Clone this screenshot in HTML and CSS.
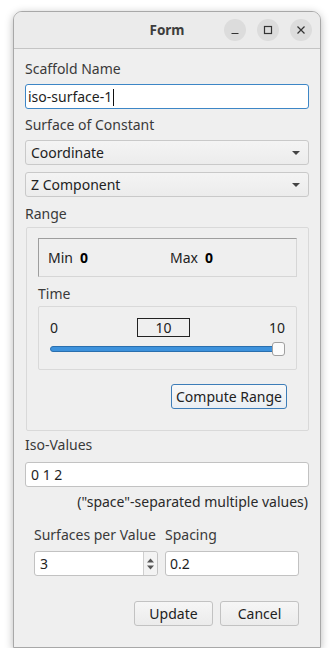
FILE: index.html
```html
<!DOCTYPE html>
<html>
<head>
<meta charset="utf-8">
<link rel="stylesheet" href="styles.css">
</head>
<body>
<div class="window">
  <div class="titlebar">
    <span class="title">Form</span>
    <div class="wbtns">
      <span class="wbtn"><svg width="10" height="10" viewBox="0 0 10 10"><path d="M1.5 8.5h7" stroke="#333" stroke-width="1.2"/></svg></span>
      <span class="wbtn"><svg width="10" height="10" viewBox="0 0 10 10"><rect x="1.5" y="1.5" width="7" height="7" fill="none" stroke="#333" stroke-width="1.2"/></svg></span>
      <span class="wbtn"><svg width="10" height="10" viewBox="0 0 10 10"><path d="M1.5 1.5l7 7M8.5 1.5l-7 7" stroke="#333" stroke-width="1.2"/></svg></span>
    </div>
  </div>
  <div class="content">
    <div class="label l-first">Scaffold Name</div>
    <div class="input focused">iso-surface-1<span class="caret"></span></div>
    <div class="label l-soc">Surface of Constant</div>
    <div class="combo c1"><span>Coordinate</span><span class="arrow"></span></div>
    <div class="combo c2"><span>Z Component</span><span class="arrow"></span></div>
    <div class="label l-range">Range</div>
    <div class="group">
      <div class="minmax">
        <span class="mm-label">Min</span><b class="mm-val">0</b>
        <span class="mm-label mm-max">Max</span><b class="mm-val">0</b>
      </div>
      <div class="label l-time">Time</div>
      <div class="timebox">
        <div class="trow">
          <span>0</span>
          <span class="tval">10</span>
          <span>10</span>
        </div>
        <div class="slider">
          <div class="groove"></div>
          <div class="handle"></div>
        </div>
      </div>
      <div class="btnrow"><span class="btn compute">Compute Range</span></div>
    </div>
    <div class="label l-iso">Iso-Values</div>
    <div class="input iso">0 1 2</div>
    <div class="hint">("space"-separated multiple values)</div>
    <div class="pair">
      <div class="col col1">
        <div class="label">Surfaces per Value</div>
        <div class="spin">
          <span class="spin-text">3</span>
          <span class="spin-btns">
            <svg width="9" height="18" viewBox="0 0 9 18"><path d="M1 7.5L4.5 3.5L8 7.5Z" fill="#555"/><path d="M1 10.5L4.5 14.5L8 10.5Z" fill="#555"/></svg>
          </span>
        </div>
      </div>
      <div class="col col2">
        <div class="label">Spacing</div>
        <div class="input sp">0.2</div>
      </div>
    </div>
    <div class="actions">
      <span class="btn act">Update</span>
      <span class="btn act">Cancel</span>
    </div>
  </div>
</div>
</body>
</html>
```

FILE: styles.css
```css
html, body {
  margin: 0;
  padding: 0;
  background: #ffffff;
}
body {
  font-family: "Noto Sans", "DejaVu Sans", sans-serif;
  font-size: 14px;
  color: #3a3a3a;
  padding: 11px 0 0 13px;
}
.window {
  width: 306px;
  height: 635px;
  border: 1px solid #a8a8a8;
  border-radius: 9px 9px 0 0;
  background: #efefef;
  box-shadow: 0 2px 8px rgba(0,0,0,0.28);
  overflow: hidden;
  display: flex;
  flex-direction: column;
}
.titlebar {
  height: 36px;
  background: #ebebeb;
  border-bottom: 1px solid #c4c4c4;
  position: relative;
  display: flex;
  align-items: center;
  justify-content: center;
  flex: none;
}
.title {
  font-weight: bold;
  font-size: 13.5px;
  color: #3d3d3d;
}
.wbtns {
  position: absolute;
  right: 8px;
  top: 7px;
  display: flex;
  gap: 11px;
}
.wbtn {
  width: 22px;
  height: 22px;
  border-radius: 50%;
  background: #dcdcdc;
  display: flex;
  align-items: center;
  justify-content: center;
}
.content {
  padding: 10px 11px 0 11px;
  display: flex;
  flex-direction: column;
}
.label {
  height: 18px;
  line-height: 18px;
  white-space: nowrap;
}
.l-first { margin-top: 1px; }
.input {
  height: 23px;
  line-height: 23px;
  border: 1px solid #c2c2c2;
  border-radius: 3px;
  background: #fff;
  padding: 0 6px;
  color: #1e1e1e;
  margin-top: 6px;
  white-space: nowrap;
}
.input.focused {
  border-color: #3d86c6;
  padding-left: 2px;
}
.caret {
  display: inline-block;
  width: 1px;
  height: 17px;
  background: #111;
  vertical-align: -4px;
  margin-left: 1px;
}
.l-soc { margin-top: 7px; }
.combo {
  height: 23px;
  border: 1px solid #c9c9c9;
  border-radius: 3px;
  background: linear-gradient(#f4f4f4, #ececec);
  display: flex;
  align-items: center;
  justify-content: space-between;
  padding: 0 8px 0 5px;
  color: #222;
}
.c1 { margin-top: 6px; }
.c2 { margin-top: 7px; }
.arrow {
  width: 0;
  height: 0;
  border-left: 4px solid transparent;
  border-right: 4px solid transparent;
  border-top: 4px solid #444;
  margin-top: 1px;
}
.l-range { margin-top: 8px; }
.group {
  margin: 4px 0 0 1px;
  border: 1px solid #d9d9d9;
  border-radius: 2px;
  height: 192px;
  padding: 10px 11px 0 11px;
  display: flex;
  flex-direction: column;
}
.minmax {
  height: 37px;
  border: 1px solid #9e9e9e;
  border-right-color: #d6d6d6;
  border-bottom-color: #d6d6d6;
  display: flex;
  align-items: center;
  padding-left: 9px;
  color: #222;
}
.mm-val {
  color: #000;
  margin-left: 7px;
}
.mm-max {
  margin-left: 82px;
}
.l-time { margin-top: 8px; }
.timebox {
  margin-top: 3px;
  height: 62px;
  border: 1px solid #d9d9d9;
  border-radius: 2px;
  padding: 0 11px;
  display: flex;
  flex-direction: column;
}
.trow {
  display: flex;
  justify-content: space-between;
  align-items: center;
  height: 20px;
  margin-top: 10px;
  color: #222;
}
.tval {
  width: 51px;
  height: 17px;
  line-height: 17px;
  border: 1px solid #222;
  text-align: center;
}
.slider {
  position: relative;
  height: 14px;
  margin-top: 5px;
}
.groove {
  position: absolute;
  left: 0;
  right: 4px;
  top: 4px;
  height: 4px;
  background: #3d92dc;
  border: 1px solid #2a6fae;
  border-radius: 3px;
}
.handle {
  position: absolute;
  right: 0;
  top: 0;
  width: 11px;
  height: 12px;
  background: #fbfbfb;
  border: 1px solid #a0a0a0;
  border-radius: 3px;
}
.btnrow {
  display: flex;
  justify-content: flex-end;
  margin-top: 14px;
  padding-right: 10px;
}
.btn {
  height: 23px;
  line-height: 23px;
  border: 1px solid #c2c2c2;
  border-radius: 3px;
  background: linear-gradient(#f6f6f6, #ebebeb);
  text-align: center;
  color: #222;
  white-space: nowrap;
}
.compute {
  width: 114px;
  border-color: #3d7db8;
  background: linear-gradient(#f8f8f8, #e9eef3);
}
.l-iso { margin-top: 5px; }
.iso { margin-top: 8px; padding-left: 5px; }
.hint {
  margin-top: 6px;
  height: 18px;
  line-height: 18px;
  text-align: right;
  color: #2a2a2a;
  padding-right: 1px;
  white-space: nowrap;
}
.pair {
  display: flex;
  margin-top: 15px;
  padding-left: 9px;
  gap: 7px;
}
.col { display: flex; flex-direction: column; }
.col1 { width: 124px; }
.col2 { width: 134px; }
.spin {
  margin-top: 7px;
  height: 23px;
  border: 1px solid #c2c2c2;
  border-radius: 3px;
  background: #fff;
  display: flex;
  align-items: center;
  color: #222;
}
.spin-text { flex: 1; padding-left: 5px; }
.spin-btns {
  width: 13px;
  height: 23px;
  border-left: 1px solid #cfcfcf;
  display: flex;
  align-items: center;
  justify-content: center;
  background: #f3f3f3;
  border-radius: 0 3px 3px 0;
}
.sp { margin-top: 7px; padding-left: 4px; }
.actions {
  display: flex;
  justify-content: flex-end;
  gap: 7px;
  margin-top: 25px;
  padding-right: 10px;
}
.act { width: 77px; }
```
